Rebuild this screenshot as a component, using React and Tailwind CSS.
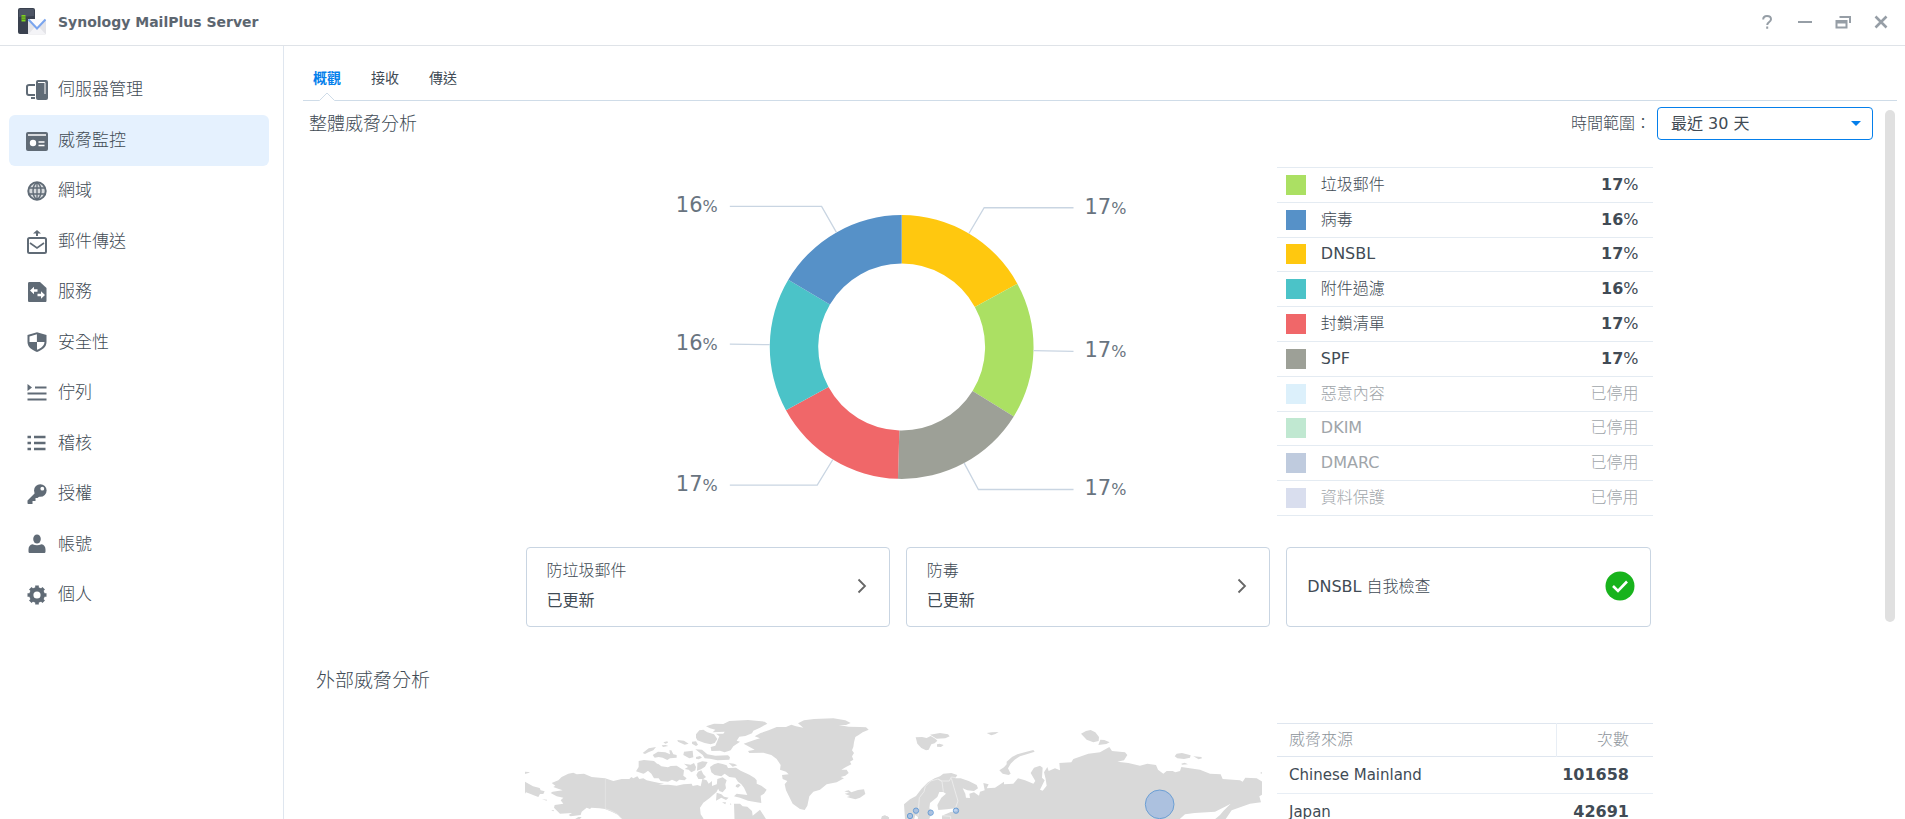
import { useState } from 'react';

const INK = '#606b76';

const icons = {
  server: (
    <>
      <path d="M10 7H4.2C3.300 7 2 7.400 2 8.500v6.500c0 .8.7 2 1.800 2H10" fill="none" stroke={INK} strokeWidth="2" />
      <rect x="6" y="19" width="4" height="2" fill={INK} />
      <rect x="11" y="2" width="12" height="20" rx="2" fill={INK} />
      <path d="M13 4.500h7V16" fill="none" stroke="#fff" strokeWidth="1" />
    </>
  ),
  monitor: (
    <>
      <rect x="1" y="3" width="22" height="19" rx="2" fill={INK} />
      <path d="M3 6h18M13.500 13h6M13.500 16.500h6" stroke="#fff" strokeWidth="1.300" />
      <circle cx="8" cy="14" r="3.200" fill="#fff" />
    </>
  ),
  globe: (
    <>
      <circle cx="12" cy="12" r="8.700" fill="none" stroke={INK} strokeWidth="2" />
      <circle cx="12" cy="12" r="8" fill={INK} fillOpacity="0.25" />
      <ellipse cx="12" cy="12" rx="4" ry="8" fill="none" stroke={INK} strokeWidth="1.400" />
      <path d="M12 4v16M4 9h16M4 15h16" stroke={INK} strokeWidth="1.300" />
    </>
  ),
  mail: (
    <>
      <rect x="3" y="8" width="18" height="15" rx="1.500" fill="none" stroke={INK} strokeWidth="2" />
      <path d="M5 13l7 5 7-5" fill="none" stroke={INK} strokeWidth="1.600" />
      <path d="M12 0l4 3.500h-3V6h-2V3.500H8z" fill={INK} />
    </>
  ),
  service: (
    <>
      <path d="M4.500 2H15l6.500 6v12.500c0 1-.5 1.500-1.500 1.500H4.500C3.500 22 3 21.500 3 20.500v-17C3 2.500 3.500 2 4.500 2z" fill={INK} />
      <path d="M5 10.500l4-3.700v2.500h3.500v2.400H9v2.500z" fill="#fff" />
      <path d="M20 15l-4 3.700v-2.500h-3.500v-2.400H16v-2.500z" fill="#fff" />
    </>
  ),
  shield: (
    <>
      <path d="M12 2.200 2.500 5v7c0 5 4.500 8.200 9.500 9.900 5-1.700 9.500-4.900 9.500-9.900V5z" fill={INK} />
      <path d="M11.900 4.300V12H4.500V6.500zM12 12h7.500c-.3 4-3.500 6.200-7.500 7.800z" fill="#fff" />
    </>
  ),
  queue: (
    <>
      <path d="M2.500 3l4.500 3.500-4.500 3.500z" fill={INK} />
      <path d="M10 6.500h11.500M2.500 12.500h19M2.500 18.500h19" stroke={INK} strokeWidth="2.200" />
    </>
  ),
  list: (
    <path d="M2.500 6H6M2.500 12H6M2.500 18H6M9 6h11.500M9 12h11.500M9 18h11.500" stroke={INK} strokeWidth="2.400" />
  ),
  key: (
    <>
      <path d="M10 11 2.500 18.500v2.500c0 .6.4 1 1 1h4v-3h3v-3h2l2.500-2z" fill={INK} />
      <circle cx="15.300" cy="8.500" r="6.300" fill={INK} />
      <circle cx="17.300" cy="6.700" r="1.900" fill="#fff" />
    </>
  ),
  user: (
    <>
      <ellipse cx="12" cy="7" rx="3.800" ry="4.500" fill={INK} />
      <path d="M7.500 12.200c3 1.500 6 1.500 9 0 2.500.3 4 2.300 4 5.300v2c0 1-.7 1.500-1.500 1.500H5c-.8 0-1.500-.5-1.500-1.500v-2c0-3 1.500-5 4-5.300z" fill={INK} />
    </>
  ),
  gear: (
    <>
      <circle cx="12" cy="12" r="5.700" fill="none" stroke={INK} strokeWidth="4.200" />
      <g stroke={INK} strokeWidth="3.600">
        <path d="M12 2.500v3M12 18.500v3M2.500 12h3M18.500 12h3M5.300 5.300l2 2M16.700 16.700l2 2M5.300 18.700l2-2M16.700 7.300l2-2" />
      </g>
    </>
  ),
};

const navItems = [
  { label: '伺服器管理', icon: 'server' },
  { label: '威脅監控', icon: 'monitor' },
  { label: '網域', icon: 'globe' },
  { label: '郵件傳送', icon: 'mail' },
  { label: '服務', icon: 'service' },
  { label: '安全性', icon: 'shield' },
  { label: '佇列', icon: 'queue' },
  { label: '稽核', icon: 'list' },
  { label: '授權', icon: 'key' },
  { label: '帳號', icon: 'user' },
  { label: '個人', icon: 'gear' },
];

const threats = [
  { name: '垃圾郵件', value: 17, swatch: 'bg-[#abe063]' },
  { name: '病毒', value: 16, swatch: 'bg-[#5691c8]' },
  { name: 'DNSBL', latin: true, value: 17, swatch: 'bg-[#ffc80f]' },
  { name: '附件過濾', value: 16, swatch: 'bg-[#4bc3c8]' },
  { name: '封鎖清單', value: 17, swatch: 'bg-[#f06769]' },
  { name: 'SPF', latin: true, value: 17, swatch: 'bg-[#9da097]' },
  { name: '惡意內容', value: null, swatch: 'bg-[#dcf0fb]' },
  { name: 'DKIM', latin: true, value: null, swatch: 'bg-[#c0e8d1]' },
  { name: 'DMARC', latin: true, value: null, swatch: 'bg-[#bfcbde]' },
  { name: '資料保護', value: null, swatch: 'bg-[#d9deee]' },
];

// Start and end in degrees, clockwise from 12 o'clock
const slices = [
  { from: 0, to: 61.3, color: '#ffc80f', value: 17 },
  { from: 61.3, to: 121.8, color: '#abe063', value: 17 },
  { from: 121.8, to: 181.6, color: '#9da097', value: 17 },
  { from: 181.6, to: 241.3, color: '#f06769', value: 17 },
  { from: 241.3, to: 300.7, color: '#4bc3c8', value: 16 },
  { from: 300.7, to: 360, color: '#5691c8', value: 16 },
];

const sources = [
  { name: 'Chinese Mainland', count: 101658 },
  { name: 'Japan', count: 42691 },
];

function polar(angle, radius) {
  const rad = (angle * Math.PI) / 180;
  return [Math.sin(rad) * radius, -Math.cos(rad) * radius];
}

function Donut() {
  const outer = 132;
  const inner = 83.5;
  return (
    <svg viewBox="-376 -180 752 350" className="block w-[752px] h-[350px]">
      {slices.map((s) => {
        const mid = (s.from + s.to) / 2;
        const edge = polar(mid, outer);
        const kink = polar(mid, 162);
        const side = mid < 180 ? 1 : -1;
        const flat = Math.abs(edge[1]) < 20;
        const points = flat
          ? [edge, [side * 172, kink[1]]]
          : [edge, kink, [side * 172, kink[1]]];
        const [a, b, c, d] = [polar(s.from, outer), polar(s.to, outer), polar(s.to, inner), polar(s.from, inner)];
        return (
          <g key={s.from}>
            <path
              d={`M${a} A${outer} ${outer} 0 0 1 ${b} L${c} A${inner} ${inner} 0 0 0 ${d} Z`}
              fill={s.color}
            />
            <polyline points={points.join(' ')} fill="none" stroke="#c9d5e2" strokeWidth="1.300" />
            <text x={side > 0 ? 183 : -226} y={kink[1] + 6} fill="#69747f" fontSize="21" className="font-normal">
              {s.value}
              <tspan fontSize="16">%</tspan>
            </text>
          </g>
        );
      })}
    </svg>
  );
}

const americas = [
  // Alaska and mainland Canada
  'M190 245L200 250 222 248 245 258 285 262 310 270 335 264 358 264 364 258 370 262 382 256 388 264 400 262 410 268 430 272 448 276 462 278 445 282 475 281 500 284 520 280 545 278 548 285 562 282 572 286 577 264 590 268 596 278 606 270 606 285 620 280 627 288 620 302 600 320 580 335 570 350 572 370 580 382 582 400 352 400 340 387 325 372 305 362 285 354 268 352 244 350 240 354 230 350 215 362 212 372 182 376 176 372 186 366 150 368 132 350 134 342 160 338 152 328 160 320 140 316 122 306 128 302 158 298 140 292 130 288 136 284 125 276 145 268 155 258 175 248z',
  'M45 242l10 1 5 2-8 2-7 2zM45 272L69 286 89 291 92 298 104 301 100 309 90 309 85 318 71 313 60 308 48 304 45 308zM96 325l15 1-1 3zM124 357l8 0-2 4zM205 378l10 0-8 9-16 0z',
  // Arctic islands
  'M386 210L402 207 432 210 442 219 424 227 416 238 405 246 400 248 378 241 386 228zM412 238L430 222 444 218 454 226 474 229 482 225 500 224 512 232 522 238 520 254 530 262 524 268 508 266 500 272 486 266 474 272 452 270 446 262 432 262 424 248zM398 186L416 172 438 168 430 178 415 184 405 189zM428 192L444 182 466 184 480 190 478 178 484 178 490 190 500 192 500 200 480 202 472 207 458 200 446 198 434 200zM455 163l12-1 8 3-16 3zM460 154l12-3 2 4-8 3zM502 147l20 2 14 9-12 3-20-9zM546 152l12-1 6 10-6 4-12-7zM522 182l26-3 2 20-12 3-18-10zM522 218L542 221 552 216 558 228 556 238 544 244 536 236 524 234 534 228zM562 216l15-5 16 2-8 14-12 8-12 4 1-16zM564 242L574 238 580 250 588 258 580 264 565 264 559 252zM556 175L576 176 592 190 616 194 654 193 660 199 658 206 622 208 600 203 584 202 578 192zM558 198l12-3 6 5-10 5-8-2z',
  'M558 130L568 118 580 116 592 124 612 130 622 144 614 156 602 160 584 156 562 148 558 140zM588 106L612 98 640 99 658 90 714 87 764 92 772 98 750 110 730 119 726 127 706 135 688 137 680 149 690 152 670 166 662 178 644 184 630 179 604 180 602 168 616 164 622 150 628 136 618 128 640 128 644 122 608 124 616 116 600 112z',
  'M600 228L612 220 624 216 638 219 650 223 654 231 678 230 692 239 718 251 734 261 740 268 740 278 754 284 770 296 762 308 752 314 754 336 740 334 714 329 690 320 672 316 680 308 712 312 702 290 694 280 684 272 676 260 658 258 644 248 634 256 614 252 604 244zM656 216l16 2 10 5-14 4zM622 264L638 259 650 268 646 280 648 292 638 304 628 300 620 284zM678 282l8-4 6 5-8 7-7-3zM620 305L634 310 642 317 656 320 648 327 634 320 618 329zM636 334l12 0-2 6zM660 336l4 4-2 3z',
  'M672 338L690 338 698 346 712 347 726 360 728 374 750 356 778 400H674z',
  // Greenland
  'M701 158L735 146 750 142 734 136 752 126 776 118 800 108 828 108 844 101 858 106 880 110 864 97 882 88 912 84 970 82 1006 88 1022 96 1008 102 986 102 1016 107 1050 108 1068 109 1076 116 1058 124 1046 132 1036 138 1032 154 1030 168 1026 178 1032 186 1026 196 1030 206 1020 212 1024 220 1008 228 994 236 1010 236 1016 246 1006 254 992 258 1002 262 980 274 950 280 930 296 910 302 898 316 892 344 884 357 870 354 848 338 838 318 828 298 824 280 832 270 818 264 816 252 836 250 828 242 810 236 812 222 800 204 784 192 760 185 718 186 714 180 734 176z',
  // Iceland, British Isles
  'M1003 301L1016 298 1024 304 1044 297 1062 295 1066 309 1050 320 1036 325 1010 318 1020 315 1004 308 1018 305zM1118 375l8-3 3 7 8 0 0 8-21 0z',
];

// Drawn in their own frame, 1110 units east of the Americas
const eurasia = [
  // Scandinavia and Russia up to the date line
  'M76 400L72 340 90 325 108 315 124 294 144 274 164 262 180 256 190 248 214 246 232 252 226 262 242 262 266 270 290 282 294 292 282 300 262 298 248 292 256 308 258 320 270 321 268 308 282 304 297 314 300 302 314 298 310 276 326 280 320 292 345 290 372 272 372 280 400 278 414 262 435 268 460 278 466 270 452 246 462 230 480 224 488 230 486 260 494 268 480 296 488 299 500 284 497 264 492 244 502 228 506 240 525 232 540 238 538 216 574 214 580 204 625 188 660 184 688 168 696 180 735 184 742 192 732 208 712 212 745 216 780 224 802 218 828 222 834 236 850 248 860 240 878 240 886 244 900 240 904 228 960 236 990 248 1022 250 1028 264 1080 268 1088 272 1096 260 1130 262 1147 272 1147 311 1138 316 1143 334 1110 338 1055 358 1035 387 1002 387 1020 372 1030 360 1052 338 1038 346 1005 362 944 366 915 370 895 388 895 400z',
  // Svalbard and Franz Josef Land
  'M107 139L126 138 140 141 152 135 166 143 172 149 164 157 154 160 146 176 138 178 124 171 112 158zM150 131L180 126 204 130 209 136 196 142 170 143zM171 160l8-2 12 4-8 6-12-1zM320 126l16-2 20-1-10 6-12 4z',
  // Novaya Zemlya
  'M358 238L372 229 380 220 380 212 396 198 412 190 434 184 460 177 464 182 440 190 420 196 404 206 392 218 384 232 392 248 386 252 368 248z',
  // Severnaya Zemlya and New Siberian islands
  'M603 128L618 120 632 117 646 124 657 138 656 150 640 154 620 146zM655 162L661 146 673 147 689 154 679 159zM884 196L890 188 906 186 932 193 930 200 912 204 892 202zM940 196l24 2 2 4-10 3zM904 218l10-3 10 5-18 1zM1140 246l6-3v5z',
  'M2 387l4-12 16 0 6 6-4 6z',
];

const pins = [
  { cx: 1200, cy: 375, r: 8 },
  { cx: 1218, cy: 359, r: 8 },
  { cx: 1262, cy: 365, r: 8 },
  { cx: 1338, cy: 359, r: 8 },
  { cx: 1949, cy: 340, r: 43 },
];

function WorldMap() {
  return (
    <svg viewBox="45 60 2211 327" className="block w-[737px] h-[109px]">
      <g fill="#d9d9d9">
        {americas.map((d) => <path key={d} d={d} />)}
      </g>
      <g transform="translate(1110 0)">
        <g fill="#d9d9d9">
          {eurasia.map((d) => <path key={d} d={d} />)}
        </g>
        {/* Baltic Sea and the Skagerrak */}
        <path d="M190 303L178 303 172 318 150 336 148 352 158 364 150 378 142 400H186L186 374 212 363 232 360 228 352 200 355 175 357 172 342 184 320 198 308zM98 400L106 372 114 378 112 400z" fill="#fff" />
        <g fill="none" stroke="#eee" strokeWidth="2.500">
          <path d="M114 376L118 320 132 302 136 286 152 270 174 264 186 272 190 302M174 264L186 270 208 270 214 258 228 260M214 262L222 290 234 330 226 352M186 374L212 376 212 400" />
        </g>
      </g>
      <path d="M286 262v91l18 6 18 10 16 18" fill="none" stroke="#e6e6e6" strokeWidth="2.500" />
      {pins.map((p) => (
        <circle key={p.cx} {...p} fill="#7faae6" fillOpacity="0.5" stroke="#6c9fd4" strokeWidth="3" />
      ))}
    </svg>
  );
}

function AppLogo() {
  return (
    <svg viewBox="0 0 28 28" className="w-7 h-7">
      <rect x="0" y="0" width="17" height="26" rx="2" fill="#3a414f" />
      <path d="M1 2.500C1 1.500 1.500 1 2.500 1h12c1 0 1.500.5 1.500 1.500V8L1 9z" fill="#4d5565" />
      <path d="M3.500 7h4v6.500h-4z" fill="#7ed321" />
      <path d="M3.500 9h4M3.500 11.200h4" stroke="#2f3a2c" strokeWidth="0.600" />
      <rect x="10" y="11" width="18" height="15.500" rx="1" fill="#e4e4e8" />
      <path d="M10.500 26 17 19h4l6.500 7z" fill="#f4f4f7" />
      <path d="M10 11h18l-9 9.500z" fill="#fbfbfd" />
      <path d="M10.500 11.500 19 20.500l8.500-9" fill="none" stroke="#7aa5ee" strokeWidth="2" />
    </svg>
  );
}

function WindowButton({ label, children }) {
  return (
    <button type="button" aria-label={label} className="flex items-center justify-center w-[38px] h-full text-[#969ea6]">
      <svg viewBox="0 0 16 16" className="w-4 h-4" fill="none" stroke="currentColor" strokeWidth="2">
        {children}
      </svg>
    </button>
  );
}

function StatusCard({ title, status }) {
  return (
    <button type="button" className="flex items-center justify-between h-20 pl-5 pr-[22px] pb-[3px] text-left border border-[#c9d5e2] rounded-[4px]">
      <span className="flex flex-col gap-[6px]">
        <span className="leading-6">{title}</span>
        <span className="leading-6 font-normal">{status}</span>
      </span>
      <svg viewBox="0 0 10 16" className="w-[10px] h-4" fill="none" stroke="#666" strokeWidth="1.800">
        <path d="M1.500 1.500 8 8l-6.500 6.500" />
      </svg>
    </button>
  );
}

export default function App() {
  const [active, setActive] = useState('威脅監控');
  const [tab, setTab] = useState('概觀');

  return (
    <div className="flex flex-col h-screen overflow-hidden bg-white text-[#414b55] text-base font-light [font-family:'DejaVu_Sans','Noto_Sans_CJK_TC',sans-serif]">
      <header className="flex items-center justify-between h-[46px] shrink-0 pl-[18px] pr-[5px] pb-[2px] border-b border-[#dfe3e8]">
        <div className="flex items-center gap-3">
          <AppLogo />
          <h1 className="text-sm font-bold text-[#5c6670]">Synology MailPlus Server</h1>
        </div>
        <div className="flex h-full">
          <WindowButton label="說明">
            <path d="M4.200 5.500C4.200 3 5.800 2 8 2s4 1 4 3.300C12 8 8.200 8 8.200 11M8.200 12.500v2.200" />
          </WindowButton>
          <WindowButton label="最小化">
            <path d="M1 8h14" />
          </WindowButton>
          <WindowButton label="還原">
            <path d="M4.500 3h10.500v6" />
            <path d="M1.500 7h10v6.500h-10zM1.500 8.500h10" />
          </WindowButton>
          <WindowButton label="關閉">
            <path d="M2.500 2.500l11 11M13.500 2.500l-11 11" strokeWidth="2.600" />
          </WindowButton>
        </div>
      </header>

      <div className="flex flex-1 min-h-0">
        <aside className="w-[284px] shrink-0 border-r border-[#dfe6ef] pt-[19px] pl-[9px] pr-[14px]">
          <nav className="grid auto-rows-fr h-[555px]">
            {navItems.map((item) => (
              <button
                key={item.label}
                type="button"
                onClick={() => setActive(item.label)}
                className={`flex items-center gap-[9px] pl-4 rounded-md text-[17px] ${active === item.label ? 'bg-[#e5f1fe]' : ''}`}
              >
                <svg viewBox="0 0 24 24" className="w-6 h-6">{icons[item.icon]}</svg>
                {item.label}
              </button>
            ))}
          </nav>
        </aside>

        <main className="flex flex-col flex-1 min-w-0 pl-[19px] pr-2">
          <div className="flex gap-[30px] h-[55px] shrink-0 pl-[10px] pt-[10px] border-b border-[#cfdce8]">
            {['概觀', '接收', '傳送'].map((name) => (
              <button
                key={name}
                type="button"
                onClick={() => setTab(name)}
                className={`relative text-sm ${tab === name ? 'font-bold text-[#057feb]' : 'font-normal'}`}
              >
                {name}
                {tab === name && (
                  <svg viewBox="0 0 16 9" className="absolute left-[6px] -bottom-px w-4 h-[9px]">
                    <path d="M0 9 8 1l8 8z" fill="#fff" />
                    <path d="M.500 8.500 8 1l7.500 7.500" fill="none" stroke="#cfdce8" />
                  </svg>
                )}
              </button>
            ))}
          </div>

          <div className="flex flex-1 min-h-0 pr-[2px]">
            <div className="flex-1 min-w-0 overflow-y-auto [scrollbar-width:none] pl-[2px] pr-[12px] pt-[6px]">
              <div className="flex items-start justify-between pl-1">
                <h2 className="text-lg leading-[34px]">整體威脅分析</h2>
                <div className="flex items-center gap-[6px]">
                  <label htmlFor="range">時間範圍：</label>
                  <div className="relative">
                    <select id="range" className="appearance-none w-[216px] h-[33px] pl-[13px] text-base font-normal bg-white border border-[#057feb] rounded-[4px]">
                      <option>最近 30 天</option>
                    </select>
                    <svg viewBox="0 0 10 5" className="absolute right-3 top-[14px] w-[10px] h-[5px] pointer-events-none">
                      <path d="M0 0h10L5 5z" fill="#057feb" />
                    </svg>
                  </div>
                </div>
              </div>

              <div className="w-[1127px] mx-auto mt-[26px]">
                <div className="flex justify-between">
                  <Donut />
                  <table className="w-[376px] h-[349px] border-collapse">
                    <tbody>
                      {threats.map((t) => (
                        <tr key={t.name} className={`border-y border-[#e4ebf2] ${t.value === null ? 'text-[#a0a5aa]' : ''}`}>
                          <td className="w-11 pl-[9px]">
                            <span className={`block w-5 h-5 ${t.swatch}`} />
                          </td>
                          <td className={`leading-5 ${t.latin ? 'font-normal' : ''}`}>{t.name}</td>
                          <td className="pr-[14px] text-right leading-5">
                            {t.value === null ? '已停用' : <span className="font-normal"><b className="font-bold">{t.value}</b>%</span>}
                          </td>
                        </tr>
                      ))}
                    </tbody>
                  </table>
                </div>

                <div className="grid grid-cols-3 gap-4 mt-[30px] pr-[2px]">
                  <StatusCard title="防垃圾郵件" status="已更新" />
                  <StatusCard title="防毒" status="已更新" />
                  <div className="flex items-center justify-between h-20 pl-5 pr-[15px] pb-[2px] border border-[#c9d5e2] rounded-[4px]">
                    <span className="pt-[2px]"><span className="font-normal">DNSBL</span> 自我檢查</span>
                    <svg viewBox="0 0 30 30" className="w-[30px] h-[30px]">
                      <circle cx="15" cy="15" r="14.500" fill="#18b31c" />
                      <path d="M8 15l5 5 9-9.500" fill="none" stroke="#fff" strokeWidth="2.600" />
                    </svg>
                  </div>
                </div>
              </div>

              <h2 className="mt-[37px] pl-[11px] text-[19px] leading-8">外部威脅分析</h2>

              <div className="flex justify-between items-start w-[1128px] mx-auto mt-[15px]">
                <WorldMap />
                <table className="w-[376px] mt-3 border-collapse">
                  <thead>
                    <tr className="h-[33px] border-y border-[#dfe6ef] text-[#8c939a]">
                      <th className="pl-3 text-left font-light">威脅來源</th>
                      <th className="w-[97px] pr-6 text-right font-light border-l border-[#e8eef5]">次數</th>
                    </tr>
                  </thead>
                  <tbody>
                    {sources.map((s) => (
                      <tr key={s.name} className="h-[37px] border-b border-[#e8eef5]">
                        <td className="pl-3 text-[15px] font-normal">{s.name}</td>
                        <td className="pr-6 text-right font-bold">{s.count}</td>
                      </tr>
                    ))}
                  </tbody>
                </table>
              </div>
            </div>
            <div className="w-[10px] h-[512px] mt-[9px] shrink-0 rounded-full bg-[#e0e0e0]" />
          </div>
        </main>
      </div>
    </div>
  );
}
